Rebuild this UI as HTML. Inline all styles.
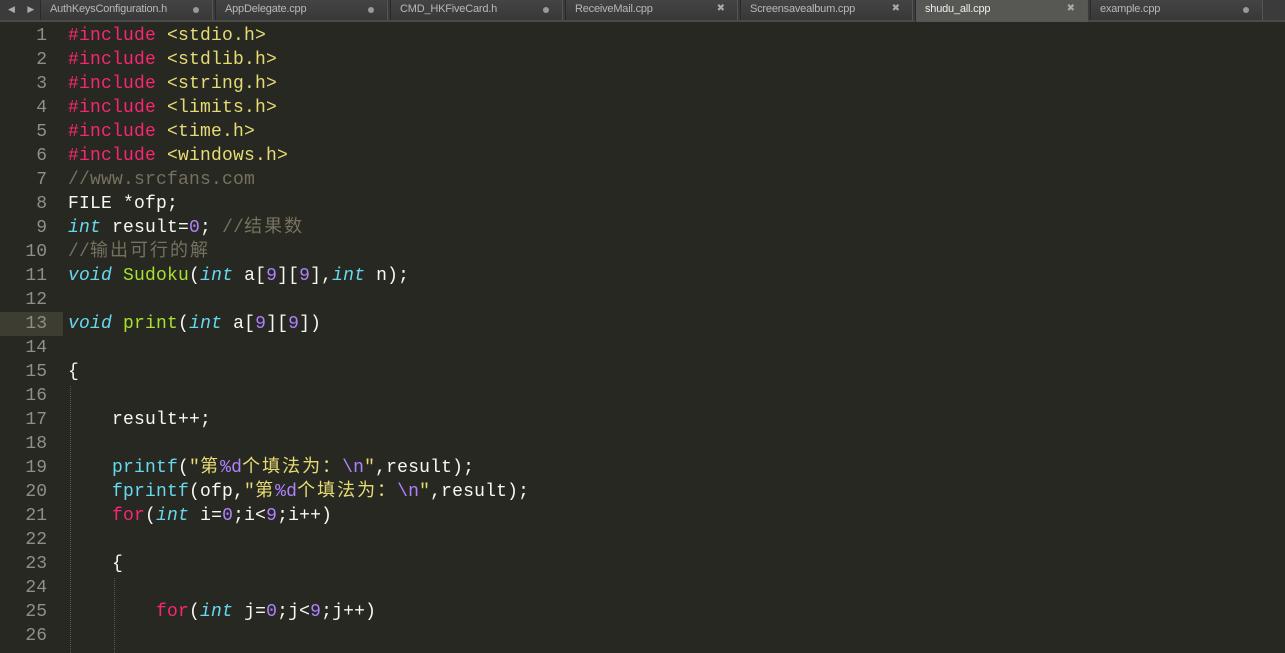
<!DOCTYPE html>
<html><head><meta charset="utf-8"><style>
html,body{margin:0;padding:0;width:1285px;height:652px;overflow:hidden;background:#272822;}
.tabs{position:absolute;left:0;top:0;width:1285px;height:20px;background:#3b3b3b;border-bottom:2px solid #4a4a48;font-family:"Liberation Sans",sans-serif;font-size:11px;color:#b8b8b8;}
.tab{position:absolute;top:0;height:20px;width:173px;border-left:1px solid #2a2a2a;border-right:1px solid #555;background:linear-gradient(#444,#383838);box-sizing:border-box;}
.tab span{position:absolute;left:9px;top:3px;letter-spacing:-0.2px}
.tab i{position:absolute;right:12px;top:3px;font-style:normal;color:#aaa;font-size:10px}
.tab b{position:absolute;right:13px;top:7px;width:6px;height:6px;border-radius:50%;background:#999}
.tab.act{background:#575754;color:#eee;height:22px}
.arr{position:absolute;left:8px;top:4px;color:#aaa;font-size:9px;letter-spacing:5px}
.code{position:absolute;left:0;top:24px;font-family:"Liberation Mono","Noto Sans CJK SC",monospace;font-size:18px;line-height:24px;color:#f8f8f2;}
.ln{position:absolute;left:0;width:47px;text-align:right;color:#908f87}
.tx{position:absolute;left:68px;white-space:pre;letter-spacing:0.2px}
.k{color:#f92672}.s{color:#e6db74}.c{color:#75715e}.t{color:#66d9ef;font-style:italic}.f{color:#a6e22e}.n{color:#ae81ff}.b{color:#66d9ef}
.z{letter-spacing:2px}
.hl{position:absolute;left:0;top:312px;width:63px;height:24px;background:#3e3d32}
.g{position:absolute;width:0;border-left:1px dotted #555;}
</style></head><body>
<div class="tabs">
<div class="arr">◀ ▶</div>
<div class="tab" style="left:40px"><span>AuthKeysConfiguration.h</span><b></b></div>
<div class="tab" style="left:215px"><span>AppDelegate.cpp</span><b></b></div>
<div class="tab" style="left:390px"><span>CMD_HKFiveCard.h</span><b></b></div>
<div class="tab" style="left:565px"><span>ReceiveMail.cpp</span><i>✖</i></div>
<div class="tab" style="left:740px"><span>Screensavealbum.cpp</span><i>✖</i></div>
<div class="tab act" style="left:915px"><span>shudu_all.cpp</span><i>✖</i></div>
<div class="tab" style="left:1090px"><span>example.cpp</span><b></b></div>
</div>
<div class="hl"></div>
<div class="g" style="left:70px;top:386px;height:267px"></div>
<div class="g" style="left:114px;top:578px;height:75px"></div>
<div class="code">
<div class="ln" style="top:0">1</div><div class="tx" style="top:0"><span class="k">#include</span> <span class="s">&lt;stdio.h&gt;</span></div>
<div class="ln" style="top:24px">2</div><div class="tx" style="top:24px"><span class="k">#include</span> <span class="s">&lt;stdlib.h&gt;</span></div>
<div class="ln" style="top:48px">3</div><div class="tx" style="top:48px"><span class="k">#include</span> <span class="s">&lt;string.h&gt;</span></div>
<div class="ln" style="top:72px">4</div><div class="tx" style="top:72px"><span class="k">#include</span> <span class="s">&lt;limits.h&gt;</span></div>
<div class="ln" style="top:96px">5</div><div class="tx" style="top:96px"><span class="k">#include</span> <span class="s">&lt;time.h&gt;</span></div>
<div class="ln" style="top:120px">6</div><div class="tx" style="top:120px"><span class="k">#include</span> <span class="s">&lt;windows.h&gt;</span></div>
<div class="ln" style="top:144px">7</div><div class="tx c" style="top:144px">//www.srcfans.com</div>
<div class="ln" style="top:168px">8</div><div class="tx" style="top:168px">FILE *ofp;</div>
<div class="ln" style="top:192px">9</div><div class="tx" style="top:192px"><span class="t">int</span> result=<span class="n">0</span>; <span class="c">//<span class="z">结果数</span></span></div>
<div class="ln" style="top:216px">10</div><div class="tx c" style="top:216px">//<span class="z">输出可行的解</span></div>
<div class="ln" style="top:240px">11</div><div class="tx" style="top:240px"><span class="t">void</span> <span class="f">Sudoku</span>(<span class="t">int</span> a[<span class="n">9</span>][<span class="n">9</span>],<span class="t">int</span> n);</div>
<div class="ln" style="top:264px">12</div>
<div class="ln" style="top:288px">13</div><div class="tx" style="top:288px"><span class="t">void</span> <span class="f">print</span>(<span class="t">int</span> a[<span class="n">9</span>][<span class="n">9</span>])</div>
<div class="ln" style="top:312px">14</div>
<div class="ln" style="top:336px">15</div><div class="tx" style="top:336px">{</div>
<div class="ln" style="top:360px">16</div>
<div class="ln" style="top:384px">17</div><div class="tx" style="top:384px">    result++;</div>
<div class="ln" style="top:408px">18</div>
<div class="ln" style="top:432px">19</div><div class="tx" style="top:432px">    <span class="b">printf</span>(<span class="s">"<span class="z">第</span><span class="n">%d</span><span class="z">个填法为：</span><span class="n">\n</span>"</span>,result);</div>
<div class="ln" style="top:456px">20</div><div class="tx" style="top:456px">    <span class="b">fprintf</span>(ofp,<span class="s">"<span class="z">第</span><span class="n">%d</span><span class="z">个填法为：</span><span class="n">\n</span>"</span>,result);</div>
<div class="ln" style="top:480px">21</div><div class="tx" style="top:480px">    <span class="k">for</span>(<span class="t">int</span> i=<span class="n">0</span>;i&lt;<span class="n">9</span>;i++)</div>
<div class="ln" style="top:504px">22</div>
<div class="ln" style="top:528px">23</div><div class="tx" style="top:528px">    {</div>
<div class="ln" style="top:552px">24</div>
<div class="ln" style="top:576px">25</div><div class="tx" style="top:576px">        <span class="k">for</span>(<span class="t">int</span> j=<span class="n">0</span>;j&lt;<span class="n">9</span>;j++)</div>
<div class="ln" style="top:600px">26</div>
</div>
</body></html>
